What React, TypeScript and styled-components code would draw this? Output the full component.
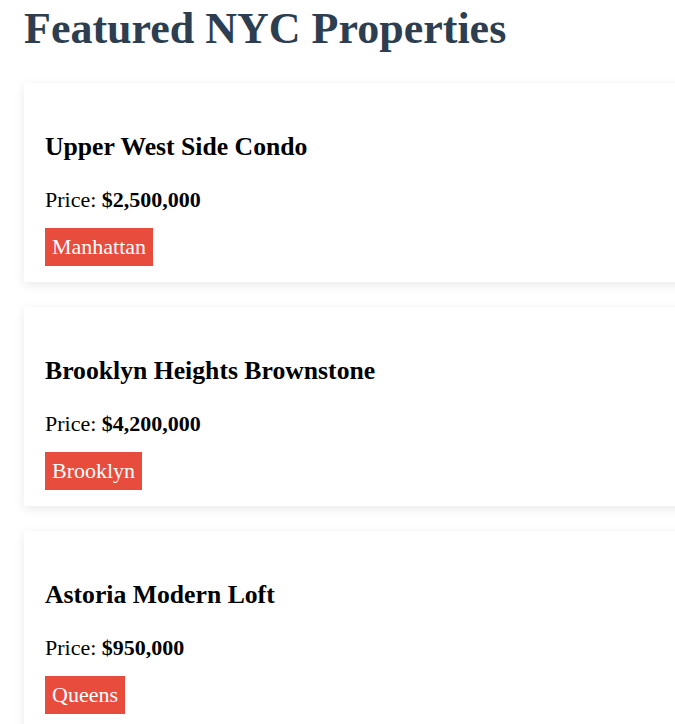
import React from "react";
import styled, { createGlobalStyle } from "styled-components";

const GlobalStyle = createGlobalStyle`
  html, body {
    margin: 0;
    padding: 0;
    background: #ffffff;
  }
  body {
    font-family: "Liberation Serif", "Times New Roman", serif;
    font-size: 22px;
    color: #000000;
  }
`;

const Page = styled.div`
  overflow: hidden;
  padding: 3px 0 0 24px;
`;

const Heading = styled.h1`
  margin: 0 0 29px;
  font-size: 44px;
  font-weight: bold;
  color: #2c3e50;
  line-height: normal;
`;

const CardList = styled.div`
  display: flex;
  flex-direction: column;
  gap: 25px;
  margin-right: -40px;
`;

const Card = styled.div`
  background: #ffffff;
  padding: 49px 21px 16px;
  box-shadow: 0 3px 10px rgba(0, 0, 0, 0.09);
  height: 199px;
  box-sizing: border-box;
`;

const Title = styled.h3`
  margin: 0 0 25px;
  font-size: 25.7px;
  font-weight: bold;
  line-height: normal;
`;

const Price = styled.p`
  margin: 0 0 14.5px;
  line-height: normal;
`;

const Badge = styled.span`
  display: inline-block;
  background: #e74c3c;
  color: #ffffff;
  padding: 6px 7px;
  line-height: normal;
`;

const properties = [
  { name: "Upper West Side Condo", price: "$2,500,000", borough: "Manhattan" },
  { name: "Brooklyn Heights Brownstone", price: "$4,200,000", borough: "Brooklyn" },
  { name: "Astoria Modern Loft", price: "$950,000", borough: "Queens" },
];

function App() {
  return (
    <Page>
      <GlobalStyle />
      <Heading>Featured NYC Properties</Heading>
      <CardList>
        {properties.map((p) => (
          <Card key={p.name}>
            <Title>{p.name}</Title>
            <Price>
              Price: <strong>{p.price}</strong>
            </Price>
            <Badge>{p.borough}</Badge>
          </Card>
        ))}
      </CardList>
    </Page>
  );
}

export default App;
